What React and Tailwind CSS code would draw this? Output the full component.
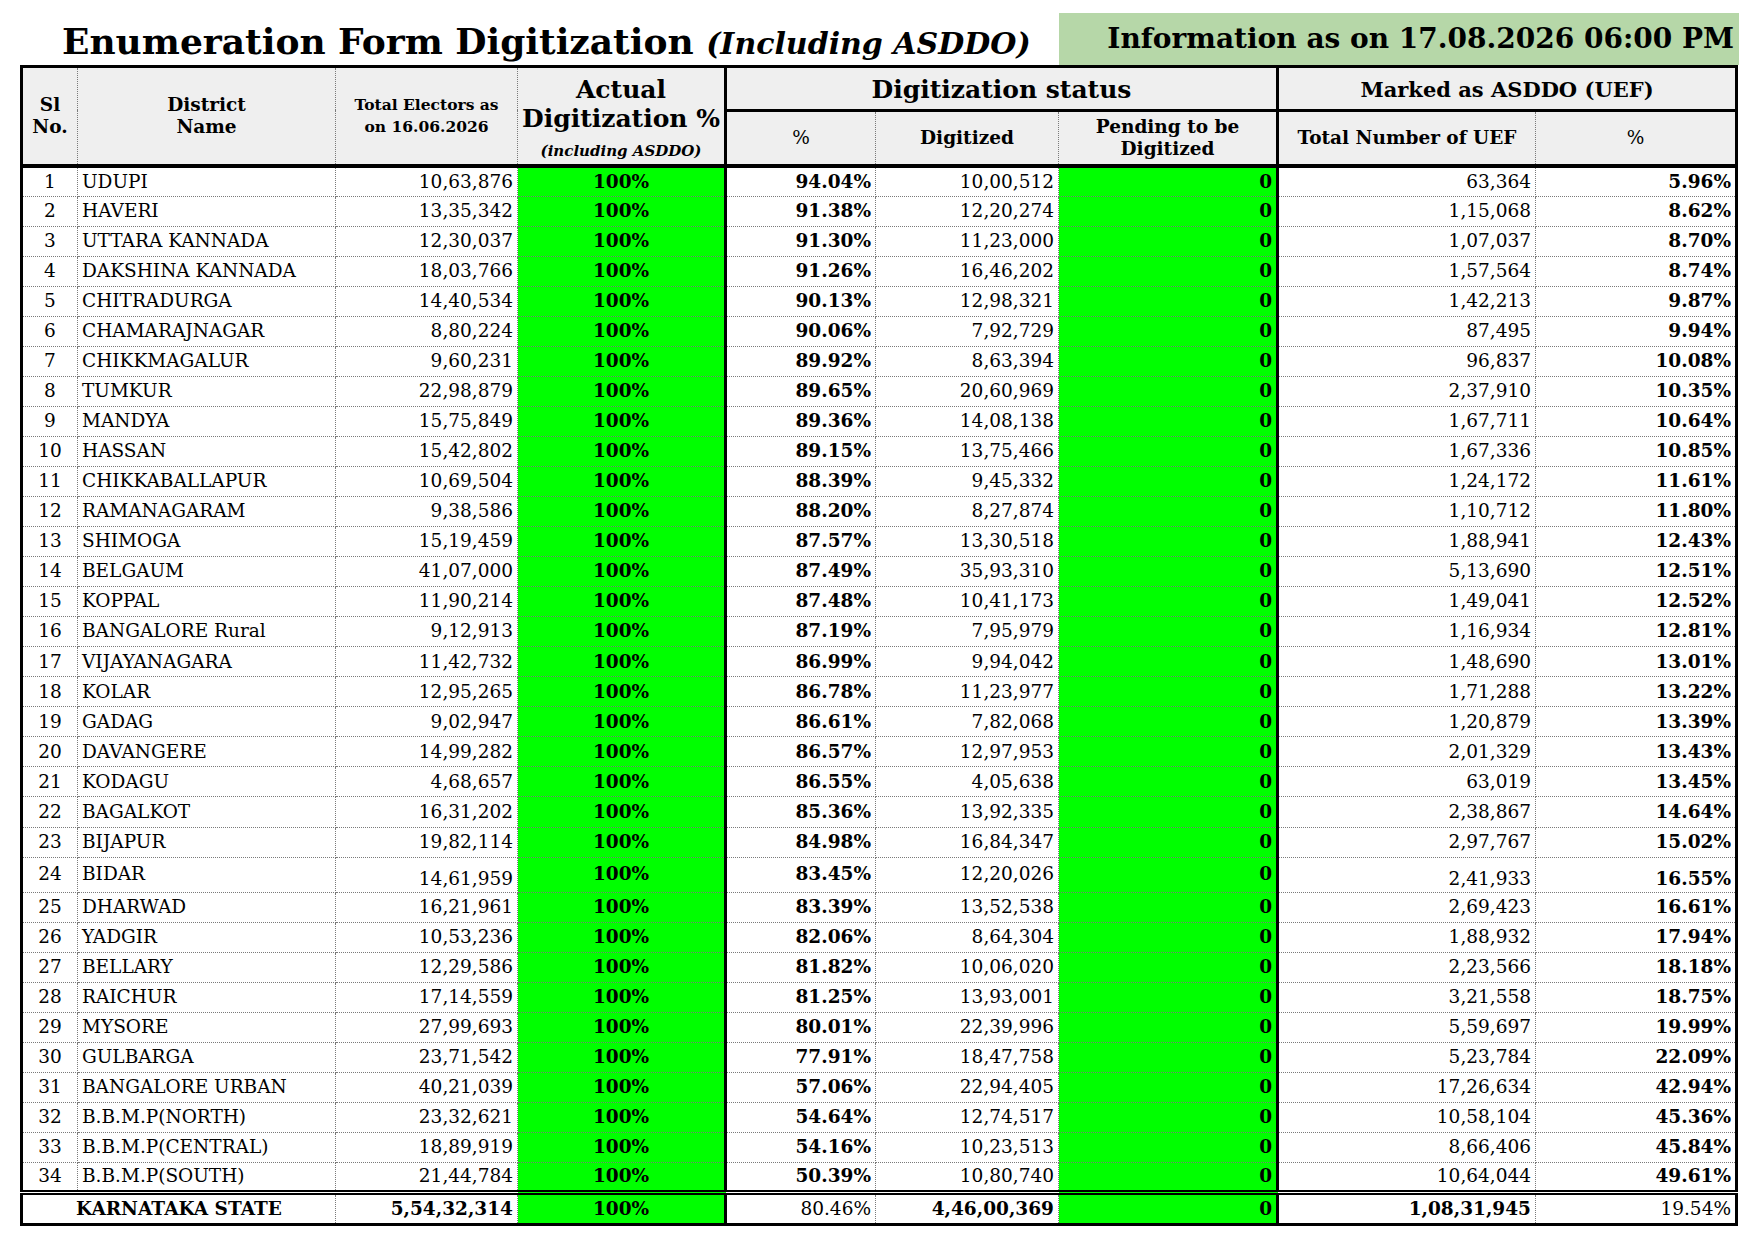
const rows = [
	["1", "UDUPI", "10,63,876", "94.04%", "10,00,512", "63,364", "5.96%"],
	["2", "HAVERI", "13,35,342", "91.38%", "12,20,274", "1,15,068", "8.62%"],
	["3", "UTTARA KANNADA", "12,30,037", "91.30%", "11,23,000", "1,07,037", "8.70%"],
	["4", "DAKSHINA KANNADA", "18,03,766", "91.26%", "16,46,202", "1,57,564", "8.74%"],
	["5", "CHITRADURGA", "14,40,534", "90.13%", "12,98,321", "1,42,213", "9.87%"],
	["6", "CHAMARAJNAGAR", "8,80,224", "90.06%", "7,92,729", "87,495", "9.94%"],
	["7", "CHIKKMAGALUR", "9,60,231", "89.92%", "8,63,394", "96,837", "10.08%"],
	["8", "TUMKUR", "22,98,879", "89.65%", "20,60,969", "2,37,910", "10.35%"],
	["9", "MANDYA", "15,75,849", "89.36%", "14,08,138", "1,67,711", "10.64%"],
	["10", "HASSAN", "15,42,802", "89.15%", "13,75,466", "1,67,336", "10.85%"],
	["11", "CHIKKABALLAPUR", "10,69,504", "88.39%", "9,45,332", "1,24,172", "11.61%"],
	["12", "RAMANAGARAM", "9,38,586", "88.20%", "8,27,874", "1,10,712", "11.80%"],
	["13", "SHIMOGA", "15,19,459", "87.57%", "13,30,518", "1,88,941", "12.43%"],
	["14", "BELGAUM", "41,07,000", "87.49%", "35,93,310", "5,13,690", "12.51%"],
	["15", "KOPPAL", "11,90,214", "87.48%", "10,41,173", "1,49,041", "12.52%"],
	["16", "BANGALORE Rural", "9,12,913", "87.19%", "7,95,979", "1,16,934", "12.81%"],
	["17", "VIJAYANAGARA", "11,42,732", "86.99%", "9,94,042", "1,48,690", "13.01%"],
	["18", "KOLAR", "12,95,265", "86.78%", "11,23,977", "1,71,288", "13.22%"],
	["19", "GADAG", "9,02,947", "86.61%", "7,82,068", "1,20,879", "13.39%"],
	["20", "DAVANGERE", "14,99,282", "86.57%", "12,97,953", "2,01,329", "13.43%"],
	["21", "KODAGU", "4,68,657", "86.55%", "4,05,638", "63,019", "13.45%"],
	["22", "BAGALKOT", "16,31,202", "85.36%", "13,92,335", "2,38,867", "14.64%"],
	["23", "BIJAPUR", "19,82,114", "84.98%", "16,84,347", "2,97,767", "15.02%"],
	["24", "BIDAR", "14,61,959", "83.45%", "12,20,026", "2,41,933", "16.55%"],
	["25", "DHARWAD", "16,21,961", "83.39%", "13,52,538", "2,69,423", "16.61%"],
	["26", "YADGIR", "10,53,236", "82.06%", "8,64,304", "1,88,932", "17.94%"],
	["27", "BELLARY", "12,29,586", "81.82%", "10,06,020", "2,23,566", "18.18%"],
	["28", "RAICHUR", "17,14,559", "81.25%", "13,93,001", "3,21,558", "18.75%"],
	["29", "MYSORE", "27,99,693", "80.01%", "22,39,996", "5,59,697", "19.99%"],
	["30", "GULBARGA", "23,71,542", "77.91%", "18,47,758", "5,23,784", "22.09%"],
	["31", "BANGALORE URBAN", "40,21,039", "57.06%", "22,94,405", "17,26,634", "42.94%"],
	["32", "B.B.M.P(NORTH)", "23,32,621", "54.64%", "12,74,517", "10,58,104", "45.36%"],
	["33", "B.B.M.P(CENTRAL)", "18,89,919", "54.16%", "10,23,513", "8,66,406", "45.84%"],
	["34", "B.B.M.P(SOUTH)", "21,44,784", "50.39%", "10,80,740", "10,64,044", "49.61%"],
];

const cell = "border border-dotted border-[#7a7a7a] px-[4px] leading-none";
const head = "border border-dotted border-[#7a7a7a] bg-[#efefef] font-bold text-center leading-[22px]";

const App = () => {
	return (
		<div className="w-[1756px] h-[1242px] bg-white text-black font-['DejaVu_Serif',serif]">
			{/* TITLE BAR */}
			<div className="flex items-start h-[65px]">
				<h1 className="pl-[62px] pt-[21px] text-[36px] font-bold leading-[40px] whitespace-nowrap flex-1">
					Enumeration Form Digitization{" "}
					<span className="italic text-[30px]">(Including ASDDO)</span>
				</h1>
				<div className="mt-[13px] mr-[17px] w-[680px] h-[52px] bg-[#b6d7a8] flex items-center justify-end pr-[5px]">
					<span className="text-[28px] font-bold whitespace-nowrap">
						Information as on 17.08.2026 06:00 PM
					</span>
				</div>
			</div>

			{/* TABLE */}
			<table className="ml-[20px] w-[1718px] table-fixed border-collapse border-[3px] border-black text-[18.5px]">
				<colgroup>
					<col className="w-[56px]" />
					<col className="w-[258px]" />
					<col className="w-[182px]" />
					<col className="w-[208px] border-r-[3px] border-black" />
					<col className="w-[150px]" />
					<col className="w-[183px]" />
					<col className="w-[219px] border-r-[3px] border-black" />
					<col className="w-[258px]" />
					<col className="w-[201px]" />
				</colgroup>

				{/* HEADER */}
				<thead className="border-b-[4px] border-black">
					<tr className="h-[43px]">
						<th rowSpan={2} className={head}>
							Sl
							<br />
							No.
						</th>
						<th rowSpan={2} className={head}>
							District
							<br />
							Name
						</th>
						<th rowSpan={2} className={`${head} text-[15.5px] leading-[20px]`}>
							Total Electors as
							<br />
							on 16.06.2026
						</th>
						<th rowSpan={2} className={`${head} text-[25px] leading-[29px] pt-[4px]`}>
							Actual
							<br />
							<span className="whitespace-nowrap">Digitization %</span>
							<br />
							<span className="italic text-[15px] leading-[18px]">(including ASDDO)</span>
						</th>
						<th colSpan={3} className="bg-[#efefef] font-bold text-center text-[25px] pt-[3px] border-b-[3px] border-black">
							Digitization status
						</th>
						<th colSpan={2} className="bg-[#efefef] font-bold text-center text-[21px] pt-[3px] border-b-[3px] border-black">
							Marked as ASDDO (UEF)
						</th>
					</tr>
					<tr className="h-[56px]">
						<th className={`${head} font-normal`}>%</th>
						<th className={head}>Digitized</th>
						<th className={head}>
							Pending to be
							<br />
							Digitized
						</th>
						<th className={head}>Total Number of UEF</th>
						<th className={`${head} font-normal`}>%</th>
					</tr>
				</thead>

				{/* DISTRICT ROWS */}
				<tbody>
					{rows.map((r) => {
						const tall = r[0] === "24";
						const low = tall ? "align-bottom pb-[3px]" : "";
						return (
							<tr key={r[0]} className={tall ? "h-[35px]" : "h-[30.05px]"}>
								<td className={`${cell} text-center`}>{r[0]}</td>
								<td className={`${cell} whitespace-nowrap`}>{r[1]}</td>
								<td className={`${cell} text-right ${low}`}>{r[2]}</td>
								<td className={`${cell} bg-[#00ff00] text-center font-bold`}>100%</td>
								<td className={`${cell} text-right font-bold`}>{r[3]}</td>
								<td className={`${cell} text-right`}>{r[4]}</td>
								<td className={`${cell} bg-[#00ff00] text-right font-bold`}>0</td>
								<td className={`${cell} text-right ${low}`}>{r[5]}</td>
								<td className={`${cell} text-right font-bold ${low}`}>{r[6]}</td>
							</tr>
						);
					})}
				</tbody>

				{/* STATE TOTAL */}
				<tfoot className="border-t-[5px] border-double border-black">
					<tr className="h-[32px]">
						<td colSpan={2} className={`${cell} text-center font-bold`}>
							KARNATAKA STATE
						</td>
						<td className={`${cell} text-right font-bold`}>5,54,32,314</td>
						<td className={`${cell} bg-[#00ff00] text-center font-bold`}>100%</td>
						<td className={`${cell} text-right`}>80.46%</td>
						<td className={`${cell} text-right font-bold`}>4,46,00,369</td>
						<td className={`${cell} bg-[#00ff00] text-right font-bold`}>0</td>
						<td className={`${cell} text-right font-bold`}>1,08,31,945</td>
						<td className={`${cell} text-right`}>19.54%</td>
					</tr>
				</tfoot>
			</table>
		</div>
	);
};

export default App;
